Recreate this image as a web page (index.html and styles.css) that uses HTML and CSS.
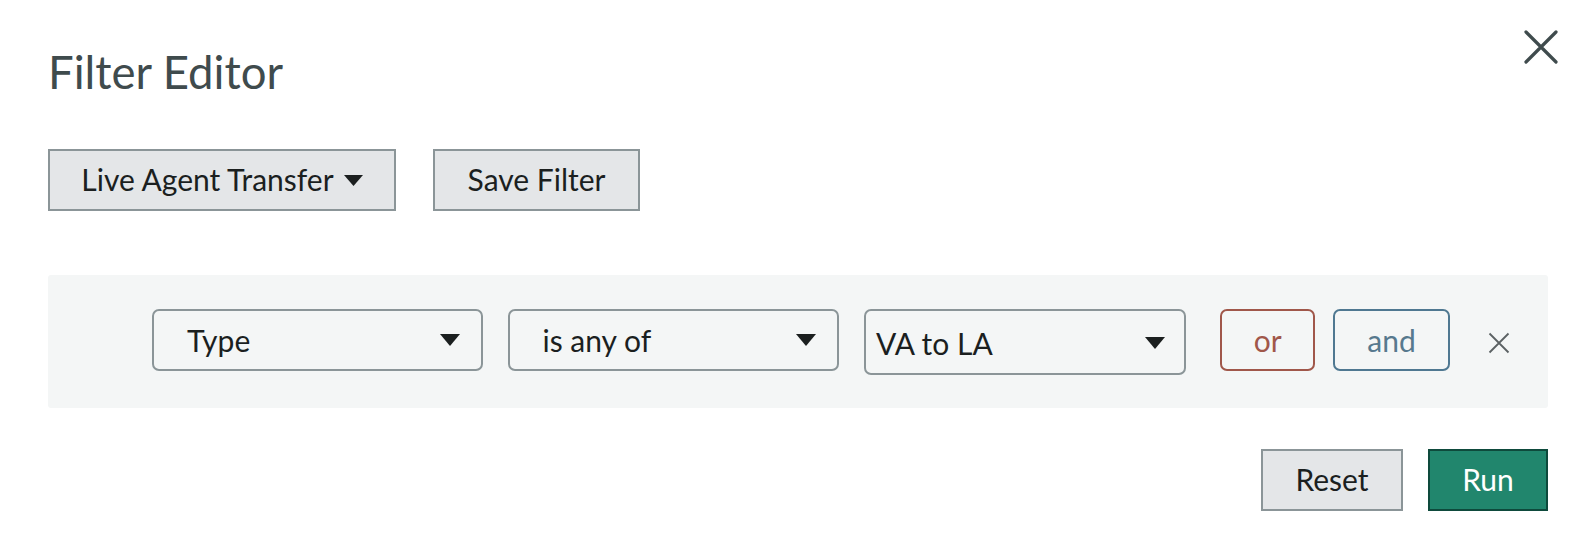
FILE: index.html
```html
<!DOCTYPE html>
<html lang="en">
<head>
<meta charset="utf-8">
<title>Filter Editor</title>
<link rel="stylesheet" href="styles.css">
</head>
<body>
<div class="dialog">
  <div class="header">
    <h1 class="title">Filter Editor</h1>
    <button class="close" aria-label="Close">
      <svg width="34" height="34" viewBox="0 0 34 34"><path d="M2 2 L32 32 M32 2 L2 32" stroke="#3f4b4d" stroke-width="3.2" stroke-linecap="round" fill="none"/></svg>
    </button>
  </div>
  <div class="toolbar">
    <button class="btn">Live Agent Transfer <svg class="caret" width="19" height="11" viewBox="0 0 19 11"><path d="M0 0 H19 L9.5 11 Z" fill="#1b1f1f"/></svg></button>
    <button class="btn">Save Filter</button>
  </div>
  <div class="panel">
    <div class="select sel-type"><span>Type</span><svg class="arrow" width="20" height="12" viewBox="0 0 20 12"><path d="M0 0 H20 L10 12 Z" fill="#1b1f1f"/></svg></div>
    <div class="select sel-op"><span>is any of</span><svg class="arrow" width="20" height="12" viewBox="0 0 20 12"><path d="M0 0 H20 L10 12 Z" fill="#1b1f1f"/></svg></div>
    <div class="select sel-val"><span>VA to LA</span><svg class="arrow" width="20" height="12" viewBox="0 0 20 12"><path d="M0 0 H20 L10 12 Z" fill="#1b1f1f"/></svg></div>
    <button class="logic or">or</button>
    <button class="logic and">and</button>
    <button class="remove" aria-label="Remove">
      <svg width="22" height="22" viewBox="0 0 22 22"><path d="M1.5 1.5 L20.5 20.5 M20.5 1.5 L1.5 20.5" stroke="#5b6163" stroke-width="1.8" fill="none"/></svg>
    </button>
  </div>
  <div class="footer">
    <button class="btn reset">Reset</button>
    <button class="btn run">Run</button>
  </div>
</div>
</body>
</html>
```
FILE: styles.css
```css
* { box-sizing: border-box; }
html, body { margin: 0; padding: 0; background: #ffffff; }
body {
  font-family: "Lato", "Liberation Sans", sans-serif;
  color: #1b1f1f;
  width: 1588px;
  height: 552px;
  overflow: hidden;
}
button { font-family: inherit; cursor: pointer; }

.dialog {
  padding: 30px 30px 0 48px;
}

.header {
  display: flex;
  justify-content: space-between;
  align-items: flex-start;
  height: 119px;
}
.title {
  margin: 14px 0 0 0;
  font-size: 45.5px;
  line-height: 56px;
  font-weight: 400;
  color: #3f4b4d;
}
.close {
  border: 0;
  background: transparent;
  padding: 0;
  width: 34px;
  height: 34px;
  display: block;
}
.close svg { display: block; }

.toolbar {
  display: flex;
  gap: 37px;
}
.btn {
  height: 62px;
  background: #e4e6e8;
  border: 2px solid #8b9598;
  border-radius: 0;
  font-size: 30px;
  color: #1b1f1f;
  padding: 0 20px 3px;
  display: inline-flex;
  align-items: center;
  justify-content: center;
  gap: 10px;
}
.toolbar .btn:first-child { width: 348px; }
.toolbar .btn:last-child { width: 207px; }
.caret { display: block; margin-top: 3px; }

.panel {
  margin-top: 64px;
  width: 1500px;
  height: 133px;
  background: #f4f6f6;
  border-radius: 3px;
  padding: 34px 38px 0 104px;
  display: flex;
  align-items: flex-start;
}
.select {
  height: 62px;
  border: 2px solid #8b9598;
  border-radius: 7px;
  display: flex;
  align-items: center;
  justify-content: space-between;
  font-size: 30px;
  color: #1b1f1f;
}
.sel-type { width: 332px; padding: 0 21px 0 33px; }
.sel-op { width: 331px; padding: 0 21px 0 32px; margin-left: 25px; }
.sel-val { width: 323px; height: 66px; padding: 2px 19px 0 10px; margin-left: 25px; }
.arrow { display: block; }

.logic {
  height: 62px;
  background: transparent;
  border: 2px solid;
  border-radius: 7px;
  font-size: 30px;
  padding: 0;
}
.or { width: 95px; margin-left: 34px; border-color: #a0574a; color: #a0574a; }
.and { width: 117px; margin-left: 18px; border-color: #4f7891; color: #57798e; }
.remove {
  margin: 23px 0 0 38px;
  width: 22px;
  height: 22px;
  border: 0;
  padding: 0;
  background: transparent;
}
.remove svg { display: block; }

.footer {
  width: 1500px;
  margin-top: 41px;
  display: flex;
  justify-content: flex-end;
  gap: 25px;
}
.reset { width: 142px; }
.run {
  width: 120px;
  background: #21866d;
  border-color: #0e4a3c;
  color: #ffffff;
}
```
